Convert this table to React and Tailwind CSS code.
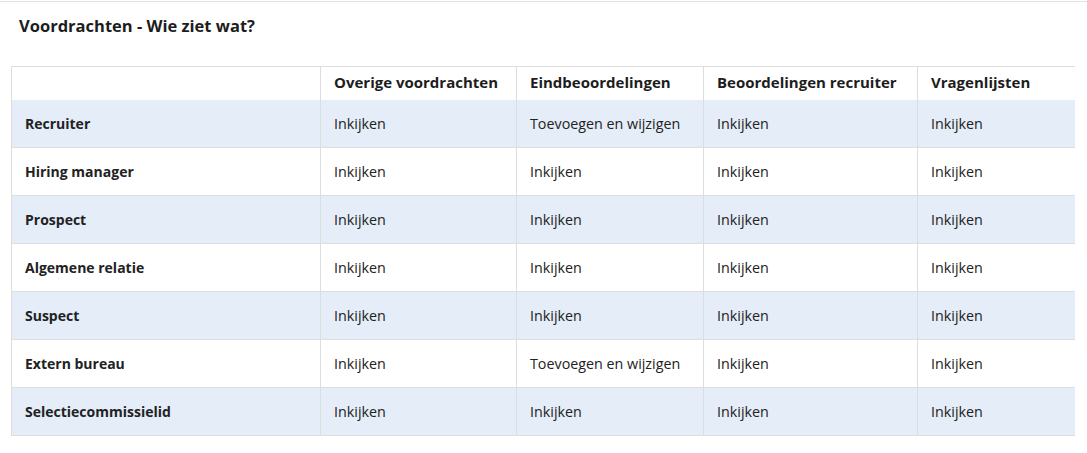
import React from "react";

const cols = ["Overige voordrachten", "Eindbeoordelingen", "Beoordelingen recruiter", "Vragenlijsten"];
const rows = [
  ["Recruiter", "Inkijken", "Toevoegen en wijzigen", "Inkijken", "Inkijken"],
  ["Hiring manager", "Inkijken", "Inkijken", "Inkijken", "Inkijken"],
  ["Prospect", "Inkijken", "Inkijken", "Inkijken", "Inkijken"],
  ["Algemene relatie", "Inkijken", "Inkijken", "Inkijken", "Inkijken"],
  ["Suspect", "Inkijken", "Inkijken", "Inkijken", "Inkijken"],
  ["Extern bureau", "Inkijken", "Toevoegen en wijzigen", "Inkijken", "Inkijken"],
  ["Selectiecommissielid", "Inkijken", "Inkijken", "Inkijken", "Inkijken"],
];
const widths = ["w-[309px]", "w-[196px]", "w-[187px]", "w-[214px]", "w-[157px]"];

export default function App() {
  return (
    <div className="w-[1087px] h-[453px] bg-white text-[#222] font-['Open_Sans',sans-serif] border-t border-[#e2e2e2] mt-px">
      <h2 className="pl-[19px] pt-[13px] text-[16.5px] font-bold leading-[22px] text-[#1d1d1d]">Voordrachten - Wie ziet wat?</h2>
      <table className="ml-[11px] mt-[29px] border-collapse table-fixed w-[1063px] text-[14.3px]">
        <thead>
          <tr className="h-[33px]">
            <th className={`${widths[0]} border-l border-t border-[#dddddd] bg-white`}></th>
            {cols.map((c, i) => (
              <th
                key={c}
                className={`${widths[i + 1]} border-l border-t border-[#dddddd] bg-white text-left font-bold text-[15px] pl-[13px] pb-[3px] text-[#1d1d1d] shadow-[0_5px_6px_-3px_rgba(60,80,110,0.18)] relative z-10`}
              >
                {c}
              </th>
            ))}
          </tr>
        </thead>
        <tbody>
          {rows.map((r, ri) => (
            <tr key={r[0]} className={`h-[48px] ${ri % 2 === 0 ? "bg-[#e4edf8]" : "bg-white"}`}>
              {r.map((cell, ci) => (
                <td
                  key={ci}
                  className={`border-l border-b border-[#dddddd] ${ci === 0 ? "font-bold text-[14px] pl-[13px]" : "pl-[13px]"} align-middle`}
                >
                  {cell}
                </td>
              ))}
            </tr>
          ))}
        </tbody>
      </table>
    </div>
  );
}
